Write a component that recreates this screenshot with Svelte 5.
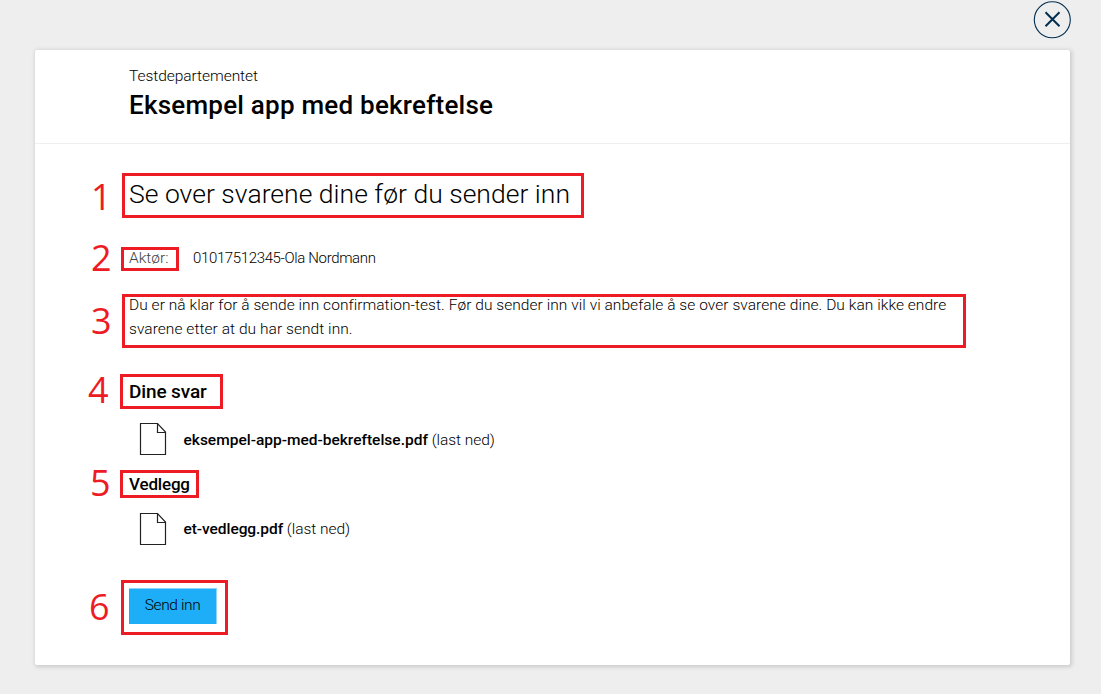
<script>
  const marks = [
    { n: 1, x: 122, y: 173, w: 462, h: 45, nx: 91, ny: 179 },
    { n: 2, x: 121, y: 247, w: 58, h: 24, nx: 91, ny: 240 },
    { n: 3, x: 122, y: 294, w: 844, h: 54, nx: 91, ny: 303 },
    { n: 4, x: 120, y: 374, w: 103, h: 35, nx: 88, ny: 372 },
    { n: 5, x: 120, y: 470, w: 79, h: 28, nx: 90, ny: 465 },
    { n: 6, x: 121, y: 580, w: 107, h: 55, nx: 89, ny: 589 }
  ];
</script>

{#snippet file(name, cls)}
  <a class="file {cls}" href="#top">
    <svg width="28" height="34" viewBox="0 0 28 34" fill="none" stroke="#222" stroke-width="1.2">
      <path d="M1.5 1.5H18.5L26.5 10V32.5H1.5Z" />
      <path d="M18.5 1.5V10.5H26.5" />
    </svg>
    <span class="text"><strong>{name}</strong> <span class="dl">(last ned)</span></span>
  </a>
{/snippet}

<div class="page">
  <div class="top">
    <button class="close" aria-label="Lukk">
      <svg width="38" height="38" viewBox="0 0 38 38" fill="none" stroke="#022f51">
        <circle cx="19.3" cy="18.8" r="18" stroke-width="1.1" />
        <path d="M12.5 11.3L26.5 25.3M26.5 11.3L12.5 25.3" stroke-width="2" />
      </svg>
    </button>
  </div>
  <main class="card">
    <header>
      <p class="org">Testdepartementet</p>
      <h1>Eksempel app med bekreftelse</h1>
    </header>
    <section>
      <h2>Se over svarene dine før du sender inn</h2>
      <div class="actor"><span class="label">Aktør:</span><span class="who">01017512345-Ola Nordmann</span></div>
      <p class="intro">Du er nå klar for å sende inn confirmation-test. Før du sender inn vil vi anbefale å se over svarene dine. Du kan ikke endre svarene etter at du har sendt inn.</p>
      <h3>Dine svar</h3>
      {@render file('eksempel-app-med-bekreftelse.pdf', 'first')}
      <h4>Vedlegg</h4>
      {@render file('et-vedlegg.pdf', 'second')}
      <button class="send">Send inn</button>
    </section>
  </main>
  {#each marks as m}
    <div class="box" style="left:{m.x}px;top:{m.y}px;width:{m.w}px;height:{m.h}px"></div>
    <span class="num" style="left:{m.nx}px;top:{m.ny}px">{m.n}</span>
  {/each}
</div>

<style>
  :global(body) { background: #eee; }
  .page {
    position: relative;
    box-sizing: border-box;
    width: 1101px;
    height: 694px;
    overflow: hidden;
    background: #eee;
    color: #000;
    font: 300 15.5px/24px Roboto, "Liberation Sans", sans-serif;
  }
  p, h1, h2, h3, h4 { margin: 0; }
  .top { display: flex; justify-content: flex-end; height: 50px; padding-right: 30px; }
  button { border: 0; padding: 0; background: none; font: inherit; color: inherit; }
  .close { width: 38px; height: 38px; margin-top: 1px; }
  .close svg { display: block; }
  .card {
    box-sizing: border-box;
    width: 1035px;
    height: 615px;
    margin-left: 35px;
    border-radius: 2px;
    background: #fff;
    box-shadow: 1px 1px 4px 1px rgba(0, 0, 0, 0.15);
  }
  header { box-sizing: border-box; height: 94px; padding: 14px 94px 0; border-bottom: 1px solid #efefef; }
  .org { letter-spacing: -0.048px; }
  h1 { margin-top: 1px; font: 500 26px/32px Roboto, sans-serif; letter-spacing: 0.226px; }
  section { display: flex; flex-direction: column; align-items: flex-start; padding: 32px 94px 0; }
  h2 { font: 300 26.5px/36px Roboto, sans-serif; letter-spacing: 0.022px; }
  .actor { display: flex; margin-top: 34px; }
  .label { width: 64px; color: #444; }
  .who { font-size: 15px; letter-spacing: -0.36px; }
  .intro { width: 830px; margin-top: 23px; letter-spacing: 0.054px; }
  h3 { margin-top: 39px; font: 500 19px/24px Roboto, sans-serif; letter-spacing: -0.12px; }
  h4 { margin-top: 16px; font: 500 17px/24px Roboto, sans-serif; letter-spacing: -0.168px; }
  .file { display: flex; align-items: center; gap: 16.5px; height: 34px; margin: 18px 0 0 10px; color: inherit; text-decoration: none; }
  .first .text { padding-top: 2px; }
  .second { margin-top: 16px; }
  strong { font-weight: 500; letter-spacing: 0; }
  .second strong { letter-spacing: -0.06px; }
  .dl { letter-spacing: -0.04px; }
  .send {
    box-sizing: border-box;
    width: 88px;
    height: 36px;
    margin-top: 42px;
    padding-bottom: 3px;
    border: 1px solid #8fd5fb;
    border-left-width: 0;
    border-bottom-width: 0;
    background: #1eaef7;
    letter-spacing: -0.377px;
  }
  .box { position: absolute; box-sizing: border-box; border: 3px solid #ed1c24; }
  .num { position: absolute; font: 400 36px/36px "Open Sans", "Noto Sans", sans-serif; color: #ed1c24; }
</style>
